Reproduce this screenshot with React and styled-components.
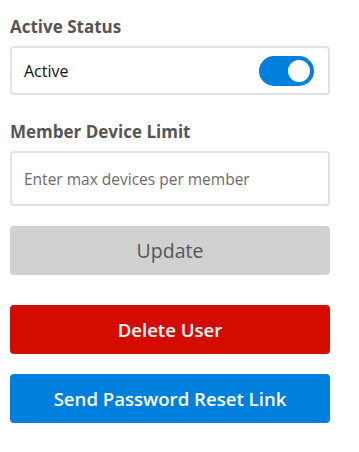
import React, { useState } from 'react'
import styled, { createGlobalStyle } from 'styled-components'

const GlobalStyle = createGlobalStyle`
  body {
    margin: 0;
    background: #fff;
    font-family: 'Open Sans', 'Noto Sans', sans-serif;
  }
`

const Panel = styled.div`
  width: 320px;
  padding: 16px 0 0 10px;
  display: flex;
  flex-direction: column;
`

const Label = styled.div`
  font-size: 17px;
  font-weight: 700;
  color: #555;
  line-height: 22px;
  margin-bottom: 8px;
`

const Field = styled.div`
  box-sizing: border-box;
  height: ${p => p.$h || 49}px;
  border: 2px solid #e2e2e2;
  border-radius: 4px;
  display: flex;
  align-items: center;
  justify-content: space-between;
  padding: 0 14px 0 12px;
  margin-bottom: ${p => p.$mb || 0}px;
`

const FieldText = styled.span`
  font-size: 16px;
  color: #111;
`

const Input = styled.input`
  border: none;
  outline: none;
  font: inherit;
  font-size: 15.5px;
  width: 100%;
  padding: 0;
  color: #333;
  &::placeholder {
    color: #6b6b6b;
  }
`

const Toggle = styled.button`
  width: 55px;
  height: 30px;
  border-radius: 15px;
  border: none;
  padding: 0 4px;
  display: flex;
  align-items: center;
  justify-content: ${p => (p.$on ? 'flex-end' : 'flex-start')};
  background: ${p => (p.$on ? '#0080dd' : '#ccc')};
  cursor: pointer;
`

const Knob = styled.span`
  width: 22px;
  height: 22px;
  border-radius: 50%;
  background: #fff;
`

const Button = styled.button`
  height: 49px;
  border: none;
  border-radius: 4px;
  font-family: inherit;
  font-size: ${p => (p.$variant === 'muted' ? 19.5 : 18.6)}px;
  font-weight: ${p => (p.$variant === 'muted' ? 400 : 600)};
  color: ${p => (p.$variant === 'muted' ? '#555' : '#fff')};
  background: ${p =>
    p.$variant === 'danger' ? '#d40c00' : p.$variant === 'primary' ? '#0080dd' : '#d1d1d1'};
  margin-top: ${p => p.$mt || 0}px;
`

export default function App() {
  const [active, setActive] = useState(true)

  return (
    <>
      <GlobalStyle />
      <Panel>
        <Label>Active Status</Label>
        <Field $mb={26}>
          <FieldText>Active</FieldText>
          <Toggle $on={active} onClick={() => setActive(!active)}>
            <Knob />
          </Toggle>
        </Field>

        <Label>Member Device Limit</Label>
        <Field $h={55}>
          <Input placeholder="Enter max devices per member" />
        </Field>

        <Button $variant="muted" $mt={20}>Update</Button>
        <Button $variant="danger" $mt={30}>Delete User</Button>
        <Button $variant="primary" $mt={20}>Send Password Reset Link</Button>
      </Panel>
    </>
  )
}
